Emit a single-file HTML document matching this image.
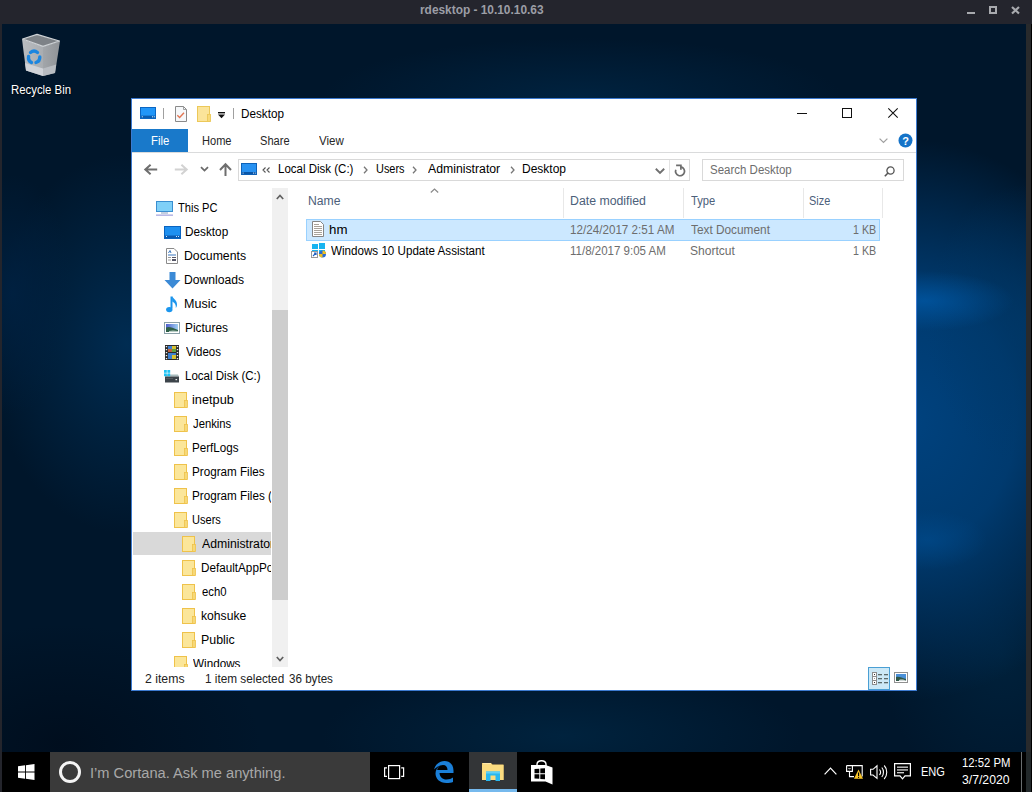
<!DOCTYPE html>
<html><head><meta charset="utf-8"><style>
*{margin:0;padding:0;box-sizing:border-box}
html,body{width:1032px;height:792px;overflow:hidden;background:#000;font-family:"Liberation Sans",sans-serif;position:relative}
.a{position:absolute}
.t{position:absolute;white-space:nowrap;transform-origin:0 0}
svg{position:absolute;overflow:visible}
</style></head><body>
<div class="a" style="left:0px;top:0px;width:1032px;height:24px;background:#24252d;"></div>
<div class="a" style="left:0px;top:24px;width:2px;height:768px;background:#24252c;"></div>
<div class="a" style="left:1026px;top:24px;width:5px;height:728px;background:#282a2c;"></div>
<div class="a" style="left:1026px;top:752px;width:5px;height:40px;background:#22282a;"></div>
<div class="a" style="left:967px;top:11.7px;width:8.4px;height:2.6px;background:#a8aaae;"></div>
<div class="a" style="left:989px;top:6px;width:8.2px;height:8.3px;border:2.3px solid #a8aaae"></div>
<svg style="left:1010.5px;top:6px" width="9" height="8.5" viewBox="0 0 9 8.5"><path d="M1 1 L8 7.5 M8 1 L1 7.5" stroke="#a8aaae" stroke-width="2.2"/></svg>
<div class="t" style="left:420.41px;top:3.74px;font-size:12px;line-height:12px;color:#9c9ea6;font-weight:bold;transform:scaleX(0.9902);">rdesktop - 10.10.10.63</div>
<div class="a" style="left:2px;top:24px;width:1024px;height:728px;overflow:hidden;background:
 radial-gradient(ellipse 90px 30px at 922px 277px, rgba(0,96,180,0.6) 0%, rgba(0,96,180,0.3) 50%, rgba(0,96,180,0) 100%),
 radial-gradient(ellipse 60px 30px at 925px 516px, rgba(0,80,150,0.5) 0%, rgba(0,80,150,0) 100%),
 radial-gradient(ellipse 100px 140px at 1024px 300px, rgba(0,56,104,0.7) 0%, rgba(0,56,104,0) 100%),
 radial-gradient(ellipse 230px 280px at 910px 396px, rgba(0,66,126,1) 0%, rgba(0,62,118,0.9) 45%, rgba(0,40,76,0) 100%),
 radial-gradient(ellipse 120px 150px at 1000px 630px, rgba(0,36,64,0.8) 0%, rgba(0,32,58,0) 100%),
 radial-gradient(ellipse 60px 120px at 10px 270px, rgba(0,34,68,0.8) 0%, rgba(0,34,68,0) 100%),
 radial-gradient(ellipse 140px 190px at 125px 320px, rgba(0,44,82,1) 0%, rgba(0,40,74,0.6) 50%, rgba(0,32,60,0) 100%),
 radial-gradient(ellipse 240px 70px at 560px 712px, rgba(0,36,64,0.9) 0%, rgba(0,30,56,0) 100%),
 radial-gradient(ellipse 260px 60px at 580px 74px, rgba(0,36,66,0.9) 0%, rgba(0,26,48,0) 100%),
 radial-gradient(ellipse 200px 120px at 60px 720px, rgba(0,14,30,1) 0%, rgba(0,14,30,0) 100%),
 #00162b"></div>
<svg style="left:20px;top:32px" width="42" height="46" viewBox="0 0 42 46">
  <defs><linearGradient id="lf" x1="0" x2="1" y1="0" y2="0"><stop offset="0" stop-color="#b9bdc1"/><stop offset="1" stop-color="#a9adb1"/></linearGradient>
  <linearGradient id="rf" x1="0" x2="1" y1="0" y2="0"><stop offset="0" stop-color="#a2a6aa"/><stop offset="1" stop-color="#8f9397"/></linearGradient></defs>
  <path d="M2 7 L23 14.5 L23 44 L6 38.5 Z" fill="url(#lf)"/>
  <path d="M23 14.5 L40 9 L35 41 L23 44 Z" fill="url(#rf)"/>
  <path d="M5 31 L23 36.5 L23 44 L6 38.5 Z" fill="#d0d3d8"/>
  <path d="M23 36.5 L36.2 32.5 L35 41 L23 44 Z" fill="#b8bcc1"/>
  <path d="M2.6 7 L17 2.4 L39.4 9 L23 14.4 Z" fill="#7d8287" stroke="#cfd3d6" stroke-width="1.3" stroke-linejoin="round"/>
  <g fill="none" stroke="#1b86e0" stroke-width="3.4" stroke-linecap="round">
   <path d="M10.5 20.5 A5.6 5.6 0 0 1 17.5 20.5"/><path d="M19.8 25 A5.6 5.6 0 0 1 16 30.5"/><path d="M11.5 30.5 A5.6 5.6 0 0 1 8.6 24.5"/>
  </g></svg>
<div class="t" style="left:10.85px;top:84.04px;font-size:12px;line-height:12px;color:#fff;font-weight:normal;transform:scaleX(0.9468);text-shadow:0 1px 2px #000;">Recycle Bin</div>
<div class="a" style="left:131px;top:98px;width:786px;height:593px;background:#fff;border:1px solid #3c7ad0"></div>
<svg style="left:140px;top:107px" width="16" height="12" viewBox="0 0 16 12"><rect x="0.5" y="0.5" width="15" height="11" fill="#2196f8" stroke="#0b66c2"/>
  <rect x="1" y="8.6" width="14" height="2.4" fill="#0a5cb0"/>
  <rect x="1.8" y="9.3" width="1" height="1" fill="#d8f0ff"/><rect x="12" y="9.3" width="1" height="1" fill="#d8f0ff"/><rect x="13.8" y="9.3" width="1" height="1" fill="#d8f0ff"/></svg>
<div class="a" style="left:163px;top:107.5px;width:1px;height:11.5px;background:#a0a0a0;"></div>
<svg style="left:175px;top:106px" width="12" height="16" viewBox="0 0 12 16"><path d="M0.5 0.5 H8.5 L11.5 3.5 V15.5 H0.5 Z" fill="#f6f8fa" stroke="#8a8a8a"/><path d="M8.5 0.5 V3.5 H11.5" fill="none" stroke="#8a8a8a" stroke-width="0.8"/>
  <path d="M2.3 9.3 L4.6 11.4 L9 6.8" fill="none" stroke="#e27552" stroke-width="1.4"/></svg>
<svg style="left:196.5px;top:106px" width="14" height="16" viewBox="0 0 14 16"><rect x="0.5" y="0.5" width="12" height="15" fill="#fbe49a" stroke="#ecc859"/>
  <rect x="10.5" y="8.5" width="3" height="7" fill="#f8d978" stroke="#ecc859" stroke-width="0.9"/></svg>
<svg style="left:218px;top:112px" width="7" height="7" viewBox="0 0 7 7"><rect x="0" y="0" width="7" height="1.4" fill="#111"/><path d="M0 2.6 H7 L3.5 6.2 Z" fill="#111"/></svg>
<div class="a" style="left:233px;top:107.5px;width:1px;height:11.5px;background:#a0a0a0;"></div>
<div class="t" style="left:240.53px;top:107.54px;font-size:12px;line-height:12px;color:#000;font-weight:normal;transform:scaleX(0.9744);">Desktop</div>
<div class="a" style="left:797px;top:113px;width:10px;height:1px;background:#111;"></div>
<div class="a" style="left:842px;top:108px;width:10px;height:10px;border:1px solid #111"></div>
<svg style="left:888px;top:108px" width="10" height="10" viewBox="0 0 10 10"><path d="M0.3 0.3 L9.7 9.7 M9.7 0.3 L0.3 9.7" stroke="#111" stroke-width="1.1"/></svg>
<div class="a" style="left:132px;top:129px;width:56px;height:23px;background:#1979ca;"></div>
<div class="t" style="left:150.66px;top:135.04px;font-size:12px;line-height:12px;color:#fff;font-weight:normal;transform:scaleX(0.9444);">File</div>
<div class="t" style="left:201.58px;top:135.04px;font-size:12px;line-height:12px;color:#262626;font-weight:normal;transform:scaleX(0.9226);">Home</div>
<div class="t" style="left:260.08px;top:135.04px;font-size:12px;line-height:12px;color:#262626;font-weight:normal;transform:scaleX(0.9226);">Share</div>
<div class="t" style="left:319.00px;top:135.04px;font-size:12px;line-height:12px;color:#262626;font-weight:normal;transform:scaleX(0.9615);">View</div>
<div class="a" style="left:132px;top:152px;width:784px;height:1px;background:#dadbdc;"></div>
<svg style="left:879px;top:138px" width="9" height="5" viewBox="0 0 9 5"><path d="M0.6 0.6 L4.5 4.4 L8.4 0.6" fill="none" stroke="#a0a0a0" stroke-width="1.3"/></svg>
<svg style="left:897.5px;top:133px" width="15" height="15" viewBox="0 0 15 15"><circle cx="7.5" cy="7.5" r="7" fill="#1573c8"/><text x="7.5" y="12" font-size="11" font-weight="bold" text-anchor="middle" fill="#fff" font-family="Liberation Sans">?</text></svg>
<svg style="left:144px;top:164px" width="14" height="12" viewBox="0 0 14 12"><path d="M13.2 5.5 H1.5 M6.6 0.7 L1.3 5.5 L6.6 10.3" fill="none" stroke="#6e6e6e" stroke-width="2"/></svg>
<svg style="left:174px;top:164px" width="14" height="12" viewBox="0 0 14 12"><path d="M0.8 5.5 H12.5 M7.4 0.7 L12.7 5.5 L7.4 10.3" fill="none" stroke="#d2d2d2" stroke-width="2"/></svg>
<svg style="left:200px;top:166px" width="9" height="6" viewBox="0 0 9 6"><path d="M1 1.2 L4.5 4.6 L8 1.2" fill="none" stroke="#6a6a6a" stroke-width="1.8"/></svg>
<svg style="left:218.5px;top:163px" width="13" height="13" viewBox="0 0 13 13"><path d="M6.5 13 V2 M1 7 L6.5 1.3 L12 7" fill="none" stroke="#6e6e6e" stroke-width="2"/></svg>
<div class="a" style="left:238px;top:159px;width:452px;height:22px;border:1px solid #d9d9d9"></div>
<svg style="left:241px;top:163px" width="16" height="12" viewBox="0 0 16 12"><rect x="0.5" y="0.5" width="15" height="11" fill="#2892f2" stroke="#0e62b8"/>
  <rect x="1" y="9" width="14" height="2.2" fill="#0a56a8"/>
  <rect x="1.6" y="9.6" width="1" height="1" fill="#cfe8ff"/><rect x="12" y="9.6" width="1" height="1" fill="#cfe8ff"/><rect x="13.8" y="9.6" width="1" height="1" fill="#cfe8ff"/></svg>
<svg style="left:262px;top:167px" width="9" height="6" viewBox="0 0 9 6"><path d="M3.5 0.5 L1 3 L3.5 5.5 M7.5 0.5 L5 3 L7.5 5.5" fill="none" stroke="#555" stroke-width="1.1"/></svg>
<div class="t" style="left:277.64px;top:162.54px;font-size:12px;line-height:12px;color:#000;font-weight:normal;transform:scaleX(0.9584);">Local Disk (C:)</div>
<svg style="left:363px;top:166px" width="5" height="8" viewBox="0 0 5 8"><path d="M1 0.8 L4 4 L1 7.2" fill="none" stroke="#777" stroke-width="1.3"/></svg>
<div class="t" style="left:375.59px;top:162.54px;font-size:12px;line-height:12px;color:#000;font-weight:normal;transform:scaleX(0.9100);">Users</div>
<svg style="left:412px;top:166px" width="5" height="8" viewBox="0 0 5 8"><path d="M1 0.8 L4 4 L1 7.2" fill="none" stroke="#777" stroke-width="1.3"/></svg>
<div class="t" style="left:427.50px;top:162.54px;font-size:12px;line-height:12px;color:#000;font-weight:normal;transform:scaleX(1.0211);">Administrator</div>
<svg style="left:510px;top:166px" width="5" height="8" viewBox="0 0 5 8"><path d="M1 0.8 L4 4 L1 7.2" fill="none" stroke="#777" stroke-width="1.3"/></svg>
<div class="t" style="left:522.00px;top:162.54px;font-size:12px;line-height:12px;color:#000;font-weight:normal;transform:scaleX(1.0000);">Desktop</div>
<svg style="left:655px;top:168px" width="10" height="6" viewBox="0 0 10 6"><path d="M0.8 0.8 L5 4.9 L9.2 0.8" fill="none" stroke="#707070" stroke-width="1.9"/></svg>
<div class="a" style="left:669px;top:160px;width:1px;height:20px;background:#e3e3e3;"></div>
<svg style="left:674px;top:164px" width="13" height="13" viewBox="0 0 13 13"><path d="M7.2 2.9 A4.5 4.5 0 1 1 1.8 5.7" fill="none" stroke="#6d6d6d" stroke-width="1.7"/><path d="M2.1 1.3 H6.9 V5.8" fill="none" stroke="#6d6d6d" stroke-width="1.7"/></svg>
<div class="a" style="left:702px;top:159px;width:202px;height:22px;border:1px solid #d9d9d9"></div>
<div class="t" style="left:710.04px;top:163.84px;font-size:12px;line-height:12px;color:#6d6d6d;font-weight:normal;transform:scaleX(0.9571);">Search Desktop</div>
<svg style="left:884px;top:166px" width="11" height="11" viewBox="0 0 11 11"><circle cx="6.5" cy="4.5" r="3.6" fill="none" stroke="#555" stroke-width="1.3"/><path d="M4 7 L0.8 10.2" stroke="#555" stroke-width="1.6"/></svg>
<div class="a" style="left:132px;top:188px;width:139px;height:479px;overflow:hidden">
<div class="a" style="left:1px;top:344px;width:138px;height:23px;background:#d9d9d9"></div>
<svg style="left:24px;top:13px" width="17" height="15" viewBox="0 0 17 15"><rect x="0.5" y="0.5" width="16" height="10" fill="#5fc0f0" stroke="#3a8ed0"/><rect x="1" y="1" width="15" height="9" fill="#7fd0f8"/><rect x="5" y="11.5" width="7" height="1" fill="#8aa0c0"/><rect x="0" y="13.5" width="17" height="1.3" fill="#a8a8e0"/></svg>
<div class="t" style="left:45.90px;top:13.84px;font-size:12px;line-height:12px;color:#000;font-weight:normal;transform:scaleX(0.9238);">This PC</div>
<svg style="left:32px;top:38px" width="17" height="13" viewBox="0 0 17 13"><rect x="0.5" y="0.5" width="16" height="12" fill="#1e90f0" stroke="#0a64c0"/><rect x="1" y="9.5" width="15" height="2.5" fill="#0a5ab0"/><rect x="2" y="10" width="1" height="1" fill="#cfe8ff"/><rect x="12" y="10" width="1" height="1" fill="#cfe8ff"/><rect x="14" y="10" width="1" height="1" fill="#cfe8ff"/></svg>
<div class="t" style="left:52.52px;top:37.84px;font-size:12px;line-height:12px;color:#000;font-weight:normal;transform:scaleX(0.9814);">Desktop</div>
<svg style="left:34px;top:60px" width="12" height="16" viewBox="0 0 12 16"><path d="M0.5 0.5 H8 L11.5 4 V15.5 H0.5 Z" fill="#fff" stroke="#8a8a8a"/><path d="M2.5 5 L4 2.5 L5 5" stroke="#3c78c0" fill="none"/><rect x="2" y="6.5" width="8" height="1" fill="#3c78c0"/><rect x="2" y="9" width="3" height="1" fill="#999"/><rect x="6" y="9" width="4" height="1" fill="#556"/><rect x="2" y="11.5" width="3" height="1" fill="#999"/><rect x="6" y="11" width="4" height="2" fill="#556"/></svg>
<div class="t" style="left:52.48px;top:61.84px;font-size:12px;line-height:12px;color:#000;font-weight:normal;transform:scaleX(1.0220);">Documents</div>
<svg style="left:32px;top:84px" width="17" height="17" viewBox="0 0 17 17"><path d="M5.5 0 H11.5 V8 H16.5 L8.5 16.5 L0.5 8 H5.5 Z" fill="#3b8ad6"/></svg>
<div class="t" style="left:52.49px;top:85.84px;font-size:12px;line-height:12px;color:#000;font-weight:normal;transform:scaleX(1.0103);">Downloads</div>
<svg style="left:34px;top:108px" width="12" height="17" viewBox="0 0 12 17"><path d="M5.5 0.5 V12.5" stroke="#1b93ea" stroke-width="2"/><ellipse cx="3.3" cy="13.6" rx="3.2" ry="2.6" fill="#1b96ee"/><path d="M6 0.3 C7.5 3 11 4.2 11 8.5 C11 10 10.6 11 9.8 12 C10 10 9.8 7.5 6.2 5.6 Z" fill="#1b96ee"/></svg>
<div class="t" style="left:52.46px;top:109.84px;font-size:12px;line-height:12px;color:#000;font-weight:normal;transform:scaleX(1.0433);">Music</div>
<svg style="left:32px;top:134px" width="16" height="12" viewBox="0 0 16 12"><defs><linearGradient id="sky" x1="0" x2="1"><stop offset="0" stop-color="#5060d0"/><stop offset="1" stop-color="#a0d0f0"/></linearGradient></defs><rect x="0.5" y="0.5" width="15" height="11" fill="#fff" stroke="#8aa0a8"/><rect x="2" y="2" width="12" height="8" fill="url(#sky)"/><path d="M2 5.5 C5 4 8 5.5 14 8 V10 H2 Z" fill="#2f6048"/><path d="M5 9 C8 8 11 8.5 14 9 V10 H5 Z" fill="#b8ccc4"/></svg>
<div class="t" style="left:52.51px;top:133.84px;font-size:12px;line-height:12px;color:#000;font-weight:normal;transform:scaleX(0.9905);">Pictures</div>
<svg style="left:33px;top:157px" width="14" height="15" viewBox="0 0 14 15"><rect x="0" y="0" width="14" height="15" fill="#2a2a2a"/><rect x="3" y="1" width="8" height="6" fill="#3d7fd0"/><rect x="3" y="8" width="8" height="6" fill="#3d7fd0"/><rect x="7" y="1" width="4" height="3" fill="#d8c030"/><rect x="7" y="4" width="4" height="3" fill="#60a040"/><rect x="3" y="4" width="4" height="3" fill="#c06040"/><rect x="7" y="10" width="4" height="4" fill="#d8c030"/><g fill="#eee"><rect x="0.8" y="1" width="1.4" height="1.2"/><rect x="0.8" y="4" width="1.4" height="1.2"/><rect x="0.8" y="7" width="1.4" height="1.2"/><rect x="0.8" y="10" width="1.4" height="1.2"/><rect x="0.8" y="13" width="1.4" height="1.2"/><rect x="11.8" y="1" width="1.4" height="1.2"/><rect x="11.8" y="4" width="1.4" height="1.2"/><rect x="11.8" y="7" width="1.4" height="1.2"/><rect x="11.8" y="10" width="1.4" height="1.2"/><rect x="11.8" y="13" width="1.4" height="1.2"/></g></svg>
<div class="t" style="left:53.50px;top:157.84px;font-size:12px;line-height:12px;color:#000;font-weight:normal;transform:scaleX(0.9583);">Videos</div>
<svg style="left:32px;top:182px" width="16" height="13" viewBox="0 0 16 13"><path d="M2 4.5 H14 L15 6.5 H1 Z" fill="#a8bcbe"/><rect x="1" y="6.5" width="14" height="6" fill="#3c444a"/><rect x="2" y="8" width="7" height="0.8" fill="#5a6268"/><rect x="11.5" y="9" width="1.6" height="1.2" fill="#e8e8e8"/><g fill="#1ec4f6"><rect x="0" y="0" width="2.8" height="2.8"/><rect x="3.4" y="0" width="2.8" height="2.8"/><rect x="0" y="3.4" width="2.8" height="2.8"/><rect x="3.4" y="3.4" width="2.8" height="2.8"/></g></svg>
<div class="t" style="left:52.54px;top:181.84px;font-size:12px;line-height:12px;color:#000;font-weight:normal;transform:scaleX(0.9610);">Local Disk (C:)</div>
<svg style="left:42px;top:204px" width="14" height="16" viewBox="0 0 14 16"><rect x="0.5" y="0.5" width="12" height="15" fill="#fbe69a" stroke="#efc24a"/><rect x="10.5" y="8.5" width="3" height="7" fill="#f6d878" stroke="#efc24a" stroke-width="0.8"/></svg>
<div class="t" style="left:60.34px;top:205.84px;font-size:12px;line-height:12px;color:#000;font-weight:normal;transform:scaleX(1.0632);">inetpub</div>
<svg style="left:42px;top:228px" width="14" height="16" viewBox="0 0 14 16"><rect x="0.5" y="0.5" width="12" height="15" fill="#fbe69a" stroke="#efc24a"/><rect x="10.5" y="8.5" width="3" height="7" fill="#f6d878" stroke="#efc24a" stroke-width="0.8"/></svg>
<div class="t" style="left:61.40px;top:229.84px;font-size:12px;line-height:12px;color:#000;font-weight:normal;transform:scaleX(0.9400);">Jenkins</div>
<svg style="left:42px;top:252px" width="14" height="16" viewBox="0 0 14 16"><rect x="0.5" y="0.5" width="12" height="15" fill="#fbe69a" stroke="#efc24a"/><rect x="10.5" y="8.5" width="3" height="7" fill="#f6d878" stroke="#efc24a" stroke-width="0.8"/></svg>
<div class="t" style="left:60.43px;top:253.84px;font-size:12px;line-height:12px;color:#000;font-weight:normal;transform:scaleX(0.9702);">PerfLogs</div>
<svg style="left:42px;top:276px" width="14" height="16" viewBox="0 0 14 16"><rect x="0.5" y="0.5" width="12" height="15" fill="#fbe69a" stroke="#efc24a"/><rect x="10.5" y="8.5" width="3" height="7" fill="#f6d878" stroke="#efc24a" stroke-width="0.8"/></svg>
<div class="t" style="left:60.43px;top:277.84px;font-size:12px;line-height:12px;color:#000;font-weight:normal;transform:scaleX(0.9726);">Program Files</div>
<svg style="left:42px;top:300px" width="14" height="16" viewBox="0 0 14 16"><rect x="0.5" y="0.5" width="12" height="15" fill="#fbe69a" stroke="#efc24a"/><rect x="10.5" y="8.5" width="3" height="7" fill="#f6d878" stroke="#efc24a" stroke-width="0.8"/></svg>
<div class="t" style="left:60.43px;top:301.84px;font-size:12px;line-height:12px;color:#000;font-weight:normal;transform:scaleX(0.9750);">Program Files (x86)</div>
<svg style="left:42px;top:324px" width="14" height="16" viewBox="0 0 14 16"><rect x="0.5" y="0.5" width="12" height="15" fill="#fbe69a" stroke="#efc24a"/><rect x="10.5" y="8.5" width="3" height="7" fill="#f6d878" stroke="#efc24a" stroke-width="0.8"/></svg>
<div class="t" style="left:60.48px;top:325.84px;font-size:12px;line-height:12px;color:#000;font-weight:normal;transform:scaleX(0.9200);">Users</div>
<svg style="left:50px;top:348px" width="14" height="16" viewBox="0 0 14 16"><rect x="0.5" y="0.5" width="12" height="15" fill="#fbe69a" stroke="#efc24a"/><rect x="10.5" y="8.5" width="3" height="7" fill="#f6d878" stroke="#efc24a" stroke-width="0.8"/></svg>
<div class="t" style="left:69.60px;top:349.84px;font-size:12px;line-height:12px;color:#000;font-weight:normal;transform:scaleX(1.0211);">Administrator</div>
<svg style="left:50px;top:372px" width="14" height="16" viewBox="0 0 14 16"><rect x="0.5" y="0.5" width="12" height="15" fill="#fbe69a" stroke="#efc24a"/><rect x="10.5" y="8.5" width="3" height="7" fill="#f6d878" stroke="#efc24a" stroke-width="0.8"/></svg>
<div class="t" style="left:68.62px;top:373.84px;font-size:12px;line-height:12px;color:#000;font-weight:normal;transform:scaleX(0.9750);">DefaultAppPool</div>
<svg style="left:50px;top:396px" width="14" height="16" viewBox="0 0 14 16"><rect x="0.5" y="0.5" width="12" height="15" fill="#fbe69a" stroke="#efc24a"/><rect x="10.5" y="8.5" width="3" height="7" fill="#f6d878" stroke="#efc24a" stroke-width="0.8"/></svg>
<div class="t" style="left:69.60px;top:397.84px;font-size:12px;line-height:12px;color:#000;font-weight:normal;transform:scaleX(0.9423);">ech0</div>
<svg style="left:50px;top:420px" width="14" height="16" viewBox="0 0 14 16"><rect x="0.5" y="0.5" width="12" height="15" fill="#fbe69a" stroke="#efc24a"/><rect x="10.5" y="8.5" width="3" height="7" fill="#f6d878" stroke="#efc24a" stroke-width="0.8"/></svg>
<div class="t" style="left:68.59px;top:421.84px;font-size:12px;line-height:12px;color:#000;font-weight:normal;transform:scaleX(1.0116);">kohsuke</div>
<svg style="left:50px;top:444px" width="14" height="16" viewBox="0 0 14 16"><rect x="0.5" y="0.5" width="12" height="15" fill="#fbe69a" stroke="#efc24a"/><rect x="10.5" y="8.5" width="3" height="7" fill="#f6d878" stroke="#efc24a" stroke-width="0.8"/></svg>
<div class="t" style="left:68.57px;top:445.84px;font-size:12px;line-height:12px;color:#000;font-weight:normal;transform:scaleX(1.0323);">Public</div>
<svg style="left:42px;top:468px" width="14" height="16" viewBox="0 0 14 16"><rect x="0.5" y="0.5" width="12" height="15" fill="#fbe69a" stroke="#efc24a"/><rect x="10.5" y="8.5" width="3" height="7" fill="#f6d878" stroke="#efc24a" stroke-width="0.8"/></svg>
<div class="t" style="left:61.40px;top:469.84px;font-size:12px;line-height:12px;color:#000;font-weight:normal;transform:scaleX(0.9750);">Windows</div>
</div>
<div class="a" style="left:272px;top:188px;width:16px;height:479px;background:#f0f0f0;"></div>
<div class="a" style="left:272px;top:310px;width:16px;height:290px;background:#cdcdcd;"></div>
<svg style="left:276px;top:194px" width="8" height="6" viewBox="0 0 8 6"><path d="M0.8 5 L4 1.5 L7.2 5" fill="none" stroke="#606060" stroke-width="1.7"/></svg>
<svg style="left:276px;top:656px" width="8" height="6" viewBox="0 0 8 6"><path d="M0.8 1 L4 4.5 L7.2 1" fill="none" stroke="#606060" stroke-width="1.7"/></svg>
<svg style="left:430px;top:188px" width="9" height="5" viewBox="0 0 9 5"><path d="M0.8 4.5 L4.5 1 L8.2 4.5" fill="none" stroke="#8a8a8a" stroke-width="1.2"/></svg>
<div class="t" style="left:308.48px;top:194.64px;font-size:12px;line-height:12px;color:#4c607a;font-weight:normal;transform:scaleX(1.0161);">Name</div>
<div class="t" style="left:569.68px;top:194.64px;font-size:12px;line-height:12px;color:#4c607a;font-weight:normal;transform:scaleX(1.0250);">Date modified</div>
<div class="t" style="left:690.80px;top:194.64px;font-size:12px;line-height:12px;color:#4c607a;font-weight:normal;transform:scaleX(0.9308);">Type</div>
<div class="t" style="left:809.09px;top:194.64px;font-size:12px;line-height:12px;color:#4c607a;font-weight:normal;transform:scaleX(0.9091);">Size</div>
<div class="a" style="left:563px;top:188px;width:1px;height:30px;background:#e8e8e8;"></div>
<div class="a" style="left:683px;top:188px;width:1px;height:30px;background:#e8e8e8;"></div>
<div class="a" style="left:803px;top:188px;width:1px;height:30px;background:#e8e8e8;"></div>
<div class="a" style="left:882px;top:188px;width:1px;height:30px;background:#e8e8e8;"></div>
<div class="a" style="left:306px;top:219px;width:574px;height:22px;background:#cce8ff;border:1px solid #99d1ff"></div>
<svg style="left:312px;top:221px" width="12" height="16" viewBox="0 0 12 16"><path d="M0.5 0.5 H8.5 L11.5 3.5 V15.5 H0.5 Z" fill="#fff" stroke="#858585"/><g fill="#a8a29a"><rect x="2" y="3" width="5" height="1"/><rect x="2" y="5" width="8" height="1"/><rect x="2" y="7" width="8" height="1"/><rect x="2" y="9" width="8" height="1"/><rect x="2" y="11" width="8" height="1"/><rect x="2" y="13" width="8" height="1"/></g></svg>
<div class="t" style="left:329.29px;top:224.04px;font-size:12px;line-height:12px;color:#000;font-weight:normal;transform:scaleX(1.1067);">hm</div>
<div class="t" style="left:569.73px;top:224.04px;font-size:12px;line-height:12px;color:#6d6d6d;font-weight:normal;transform:scaleX(0.9717);">12/24/2017 2:51 AM</div>
<div class="t" style="left:690.80px;top:224.04px;font-size:12px;line-height:12px;color:#6d6d6d;font-weight:normal;transform:scaleX(0.9863);">Text Document</div>
<div class="t" style="left:852.71px;top:224.04px;font-size:12px;line-height:12px;color:#6d6d6d;font-weight:normal;transform:scaleX(0.8920);">1 KB</div>
<svg style="left:311px;top:243px" width="16" height="15" viewBox="0 0 16 15"><g fill="#18b4f0"><rect x="1" y="1" width="6" height="5"/><rect x="8" y="0" width="6" height="6"/><rect x="1" y="7" width="6" height="5"/><rect x="8" y="7" width="6" height="6"/></g><rect x="0.5" y="8.5" width="6" height="6" fill="#fff" stroke="#999"/><path d="M2 13 L5 10 M3 10 H5 V12" stroke="#2060c0" stroke-width="1.2" fill="none"/><circle cx="11.5" cy="11" r="3.5" fill="#2a6ad0"/><path d="M11.5 7.5 A3.5 3.5 0 0 1 15 11 H11.5 Z M11.5 11 V14.5 A3.5 3.5 0 0 1 8 11 Z" fill="#f0c020"/></svg>
<div class="t" style="left:330.50px;top:244.54px;font-size:12px;line-height:12px;color:#000;font-weight:normal;transform:scaleX(0.9686);">Windows 10 Update Assistant</div>
<div class="t" style="left:569.74px;top:244.54px;font-size:12px;line-height:12px;color:#6d6d6d;font-weight:normal;transform:scaleX(0.9590);">11/8/2017 9:05 AM</div>
<div class="t" style="left:689.80px;top:244.54px;font-size:12px;line-height:12px;color:#6d6d6d;font-weight:normal;transform:scaleX(1.0045);">Shortcut</div>
<div class="t" style="left:852.71px;top:244.54px;font-size:12px;line-height:12px;color:#6d6d6d;font-weight:normal;transform:scaleX(0.8920);">1 KB</div>
<div class="t" style="left:145.18px;top:672.64px;font-size:12px;line-height:12px;color:#222;font-weight:normal;transform:scaleX(1.0216);">2 items</div>
<div class="t" style="left:204.92px;top:672.64px;font-size:12px;line-height:12px;color:#222;font-weight:normal;transform:scaleX(0.9810);">1 item selected</div>
<div class="t" style="left:289.23px;top:672.64px;font-size:12px;line-height:12px;color:#222;font-weight:normal;transform:scaleX(0.9682);">36 bytes</div>
<div class="a" style="left:868px;top:667px;width:22px;height:23px;background:#cce8f6;border:1px solid #4a9fd4"></div>
<svg style="left:872px;top:672px" width="17" height="13" viewBox="0 0 17 13"><rect x="0" y="0" width="5" height="13" fill="#8c8c8c"/><g fill="#fff"><rect x="1" y="1" width="3" height="3"/><rect x="1" y="5" width="3" height="3"/><rect x="1" y="9" width="3" height="3"/></g><g fill="#333"><rect x="2" y="2" width="1" height="1"/><rect x="2" y="6" width="1" height="1" fill="#999"/><rect x="2" y="10" width="1" height="1"/></g><g fill="#5c6a6a"><rect x="6" y="2" width="4" height="1.3"/><rect x="12" y="2" width="4" height="1.3"/><rect x="6" y="6" width="4" height="1.3"/><rect x="12" y="6" width="4" height="1.3"/><rect x="6" y="10" width="4" height="1.3"/><rect x="12" y="10" width="4" height="1.3"/></g></svg>
<svg style="left:894px;top:672px" width="14" height="11" viewBox="0 0 14 11"><rect x="0.5" y="0.5" width="13" height="10" fill="#fff" stroke="#909090"/><rect x="2" y="2" width="10" height="7" fill="#4a90d8"/><path d="M2 5 C5 4 8 6 12 7 V9 H2 Z" fill="#305848"/><path d="M5 8 C8 7 10 8 12 8.5 V9 H5 Z" fill="#d0d8d8"/></svg>
<div class="a" style="left:2px;top:752px;width:1024px;height:40px;background:#000;"></div>
<svg style="left:18px;top:764px" width="17" height="16" viewBox="0 0 17 16"><path d="M0 2.3 L7 1.3 V7.5 H0 Z M7.9 1.2 L16.5 0 V7.5 H7.9 Z M0 8.4 H7 V14.7 L0 13.7 Z M7.9 8.4 H16.5 V16 L7.9 14.8 Z" fill="#fff"/></svg>
<div class="a" style="left:50px;top:752px;width:320px;height:40px;background:#3a3a3a;"></div>
<div class="a" style="left:59px;top:761px;width:22px;height:22px;border:3px solid #f4f4f4;border-radius:50%"></div>
<div class="t" style="left:89.85px;top:764.88px;font-size:15.5px;line-height:15.5px;color:#a8a8a8;font-weight:normal;transform:scaleX(0.9454);">I’m Cortana. Ask me anything.</div>
<svg style="left:384px;top:764px" width="21" height="16" viewBox="0 0 21 16"><rect x="4.6" y="1.6" width="11" height="13" fill="none" stroke="#fff" stroke-width="1.2"/><path d="M3 3.8 H0.6 V12.4 H3 M17.2 3.8 H19.6 V12.4 H17.2" fill="none" stroke="#fff" stroke-width="1.2"/></svg>
<svg style="left:433px;top:761px" width="21" height="22" viewBox="0 0 21 22"><path d="M1 8.5 C2.5 3 7 0 11.5 0 C17 0 20.5 4 20.5 9.5 V12 H6.5 C6.8 16 9.5 18.5 13.5 18.5 C16 18.5 18.5 17.5 20 16.5 V21 C18.5 21.7 16 22 13.5 22 C6.5 22 2.5 17.5 2.5 12.5 C2.5 9 4.5 6 7 4.8 C5 6.5 4.3 8 4.2 9 H14.5 C14.5 6 13 4 10 4 C6 4 3 6.5 1 8.5 Z" fill="#1a7fd8"/></svg>
<div class="a" style="left:469px;top:752px;width:48px;height:40px;background:#333537;"></div>
<div class="a" style="left:469px;top:789px;width:48px;height:3px;background:#76b9ed;"></div>
<svg style="left:482px;top:762px" width="22" height="19" viewBox="0 0 22 19"><path d="M0 1 H9 L10.5 2.5 H21.5 V18 H0 Z" fill="#f6d070"/>
  <rect x="0" y="3" width="21.5" height="15" fill="#fbdc80"/>
  <rect x="1" y="1.3" width="8" height="1" fill="#fff3c0"/>
  <path d="M4 9.5 H18 V19 H13.5 V13.5 H8.5 V19 H4 Z" fill="#28b8f0"/>
  <rect x="4" y="9.5" width="14" height="2" fill="#60d0f8"/></svg>
<svg style="left:531px;top:760px" width="22" height="25" viewBox="0 0 22 25"><path d="M6 6 V4.5 C6 2 7.8 0.7 10.5 0.7 C13.2 0.7 15 2 15 4.5 V7" fill="none" stroke="#fff" stroke-width="1.4"/>
  <path d="M0 5 H14.5 L21.5 7.5 V24.5 L14.5 21.5 H0 Z" fill="#fff"/>
  <path d="M3.5 9 L8.3 8.7 V13.3 H3.5 Z M9.3 8.6 L14 8.3 V13.3 H9.3 Z M3.5 14.3 H8.3 V18.8 L3.5 18.4 Z M9.3 14.3 H14 V19.3 L9.3 18.9 Z" fill="#000"/></svg>
<svg style="left:824px;top:767px" width="13" height="8" viewBox="0 0 13 8"><path d="M0.6 7.3 L6.5 1.2 L12.4 7.3" fill="none" stroke="#fff" stroke-width="1.2"/></svg>
<svg style="left:846px;top:765px" width="17" height="15" viewBox="0 0 17 15"><path d="M0.6 0.6 H16.2 V11.5 M0.6 0.6 V6.4 H6.4 V0.6 M3.5 6.4 V11.6 H8" fill="none" stroke="#fff" stroke-width="1.1"/>
  <path d="M2.5 3 L3.5 4.2 L4.5 3" fill="none" stroke="#fff" stroke-width="0.9"/>
  <path d="M12.5 4.5 L17 13.8 H8 Z" fill="#f7c42a"/>
  <rect x="12" y="7.5" width="1.1" height="3.5" fill="#000"/><rect x="12" y="11.8" width="1.1" height="1.1" fill="#000"/></svg>
<svg style="left:870px;top:765px" width="18" height="15" viewBox="0 0 18 15"><path d="M0.6 4.3 H3 L7 0.8 V13.4 L3 10 H0.6 Z" fill="none" stroke="#fff" stroke-width="1.1"/>
  <path d="M9.5 4.5 C10.7 6 10.7 8.5 9.5 10" fill="none" stroke="#fff" stroke-width="1.1"/>
  <path d="M11.8 2.5 C14 5 14 9.5 11.8 12" fill="none" stroke="#fff" stroke-width="1.1"/>
  <path d="M14.2 0.5 C17.6 4 17.6 10.5 14.2 14" fill="none" stroke="#fff" stroke-width="1.1"/></svg>
<svg style="left:894px;top:763px" width="17" height="17" viewBox="0 0 17 17"><path d="M0.6 0.6 H16.4 V12.8 H11 L8.5 15.8 L6 12.8 H0.6 Z" fill="none" stroke="#fff" stroke-width="1.2"/>
  <rect x="3" y="3.6" width="11" height="1.1" fill="#fff"/><rect x="3" y="6.4" width="11" height="1.1" fill="#fff"/><rect x="3" y="9.2" width="7" height="1.1" fill="#fff"/></svg>
<div class="t" style="left:920.88px;top:766.04px;font-size:12px;line-height:12px;color:#fff;font-weight:normal;transform:scaleX(0.9208);">ENG</div>
<div class="t" style="left:962.46px;top:756.64px;font-size:12px;line-height:12px;color:#fff;font-weight:normal;transform:scaleX(0.9408);">12:52 PM</div>
<div class="t" style="left:962.18px;top:774.04px;font-size:12px;line-height:12px;color:#fff;font-weight:normal;transform:scaleX(1.0178);">3/7/2020</div>
<div class="a" style="left:1021px;top:752px;width:1px;height:40px;background:#6a6e70;"></div>

</body></html>
